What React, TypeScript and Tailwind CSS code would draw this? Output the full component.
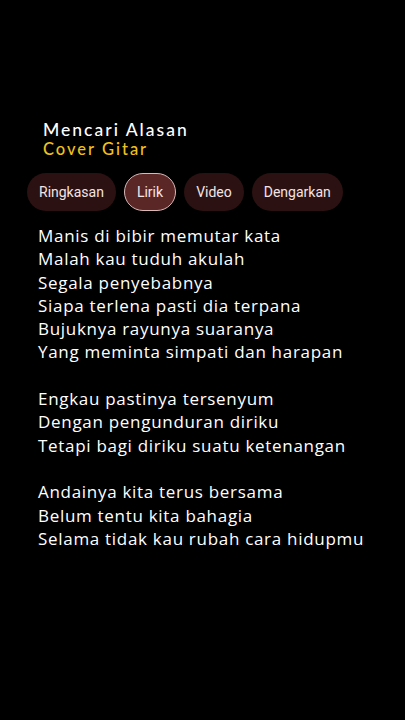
const tabs = ["Ringkasan", "Lirik", "Video", "Dengarkan"];

const stanzas = [
  [
    "Manis di bibir memutar kata",
    "Malah kau tuduh akulah",
    "Segala penyebabnya",
    "Siapa terlena pasti dia terpana",
    "Bujuknya rayunya suaranya",
    "Yang meminta simpati dan harapan",
  ],
  ["Engkau pastinya tersenyum", "Dengan pengunduran diriku", "Tetapi bagi diriku suatu ketenangan"],
  ["Andainya kita terus bersama", "Belum tentu kita bahagia", "Selama tidak kau rubah cara hidupmu"],
];

export default function App() {
  return (
    <div className="min-h-[720px] w-[405px] bg-black text-white">
      <div className="pt-[120px] pl-[43px] font-['Lato',sans-serif] tracking-[2px]">
        <h1 className="text-[17.5px] leading-[20px] font-medium text-white">Mencari Alasan</h1>
        <p className="text-[16.5px] leading-[18px] font-medium text-[#f2c01e]">Cover Gitar</p>
      </div>

      <div className="mt-[15px] flex gap-[8px] pl-[27px] font-['Roboto',sans-serif] text-[14px]">
        {tabs.map((t) =>
          t === "Lirik" ? (
            <div
              key={t}
              className="h-[38px] px-[12px] flex items-center rounded-full bg-[#5a2626] border border-[#d9b8b8] text-[#f6e6e6]"
            >
              {t}
            </div>
          ) : (
            <div
              key={t}
              className="h-[38px] px-[12px] flex items-center rounded-full bg-[#2b1111] text-[#f3e4e4]"
            >
              {t}
            </div>
          )
        )}
      </div>

      <div className="mt-[13px] pl-[38px] font-['Open_Sans',sans-serif] text-[17px] leading-[23.3px] tracking-[0.7px] flex flex-col gap-[23.3px]">
        {stanzas.map((s, i) => (
          <div key={i}>
            {s.map((l) => (
              <div key={l}>{l}</div>
            ))}
          </div>
        ))}
      </div>
    </div>
  );
}
